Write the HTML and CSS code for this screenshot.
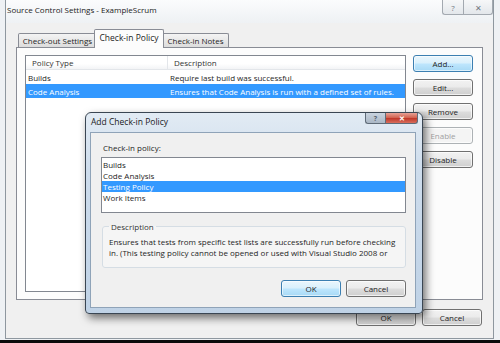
FILE: index.html
```html
<!doctype html>
<html lang="en">
    <head>
        <meta charset="UTF-8" />
        <title>Source Control Settings - ExampleScrum</title>
        <link rel="stylesheet" href="styles.css">
    </head>
    <body>
        <div class="desktop">
            <div class="window">
                <div class="titlebar">
                    <span class="title">Source Control Settings - ExampleScrum</span>
                    <div class="caption">
                        <span class="cap help">?</span>
                        <span class="cap close">&#x2715;</span>
                    </div>
                </div>
                <div class="client">
                    <div class="tabs">
                        <div class="tab t-out">Check-out Settings</div>
                        <div class="tab t-in active">Check-in Policy</div>
                        <div class="tab t-notes">Check-in Notes</div>
                    </div>
                    <div class="panel">
                        <div class="listview">
                            <div class="lv-head">
                                <span class="col1">Policy Type</span>
                                <span class="col2">Description</span>
                            </div>
                            <div class="lv-row">
                                <span class="col1">Builds</span>
                                <span class="col2">Require last build was successful.</span>
                            </div>
                            <div class="lv-row selected">
                                <span class="col1">Code Analysis</span>
                                <span class="col2">Ensures that Code Analysis is run with a defined set of rules.</span>
                            </div>
                        </div>
                        <div class="side-btns">
                            <button class="btn default">Add...</button>
                            <button class="btn">Edit...</button>
                            <button class="btn">Remove</button>
                            <button class="btn" disabled>Enable</button>
                            <button class="btn">Disable</button>
                        </div>
                    </div>
                    <div class="footer">
                        <button class="btn">OK</button>
                        <button class="btn">Cancel</button>
                    </div>
                </div>
            </div>

            <div class="dialog">
                <div class="dlg-title">
                    <span class="dlg-text">Add Check-in Policy</span>
                    <div class="dlg-caption">
                        <span class="dcap dhelp">?</span>
                        <span class="dcap dclose">&#x2715;</span>
                    </div>
                </div>
                <div class="dlg-client">
                    <div class="label">Check-in policy:</div>
                    <div class="listbox">
                        <div class="item">Builds</div>
                        <div class="item">Code Analysis</div>
                        <div class="item selected">Testing Policy</div>
                        <div class="item">Work Items</div>
                    </div>
                    <fieldset class="group">
                        <legend>Description</legend>
                        <div class="desc">
                            <span>Ensures that tests from specific test lists are successfully run before checking</span>
                            <span>in. (This testing policy cannot be opened or used with Visual Studio 2008 or</span>
                        </div>
                    </fieldset>
                    <div class="dlg-buttons">
                        <button class="btn default">OK</button>
                        <button class="btn">Cancel</button>
                    </div>
                </div>
            </div>
        </div>
    </body>
</html>
```

FILE: styles.css
```css
* {
    box-sizing: border-box;
}

html,
body {
    margin: 0;
    padding: 0;
}

body {
    width: 500px;
    height: 343px;
    overflow: hidden;
    background: #0b0b0b;
    font-family: "Open Sans", "Liberation Sans", sans-serif;
    font-size: 8px;
    color: #1e1e1e;
}

.desktop {
    position: relative;
    height: 340px;
    padding-left: 5px;
    background: #eef1f4;
}

.window {
    width: 489px;
    height: 339px;
    display: flex;
    flex-direction: column;
    background: #f0f0f0;
    border: 1px solid #8e979f;
    border-top: none;
}

.titlebar {
    height: 23px;
    display: flex;
    justify-content: space-between;
    align-items: flex-start;
    background: linear-gradient(#fbfcfd, #eef1f4);
}

.title {
    font-size: 8px;
    line-height: 20px;
    padding-left: 1px;
    color: #222;
}

.caption {
    display: flex;
}

.cap {
    height: 15px;
    display: flex;
    align-items: center;
    justify-content: center;
    border: 1px solid #a3a9b0;
    border-top: none;
    background: linear-gradient(#f6f7f8, #e3e7eb);
    color: #707880;
    font-size: 8px;
}

.cap.help {
    width: 21px;
    border-radius: 0 0 0 3px;
    border-right: none;
}

.cap.close {
    width: 30px;
    border-radius: 0 0 3px 0;
}

.client {
    flex: 1;
    display: flex;
    flex-direction: column;
    padding: 6px 10px 0 10px;
}

.tabs {
    display: flex;
    align-items: flex-end;
    height: 18px;
    padding-left: 2px;
}

.tab {
    height: 14px;
    line-height: 13px;
    text-align: center;
    border: 1px solid #898c95;
    border-bottom: none;
    border-radius: 2px 2px 0 0;
    background: linear-gradient(#f4f4f4, #dcdcdc);
    margin-right: -1px;
    white-space: nowrap;
}

.t-out {
    width: 79px;
}

.t-in {
    width: 70px;
}

.t-notes {
    width: 67px;
}

.tab.active {
    position: relative;
    z-index: 1;
    height: 19px;
    line-height: 16px;
    margin: 0 -2px -1px -2px;
    background: #fcfcfc;
    font-size: 8.5px;
}

.panel {
    height: 253px;
    display: flex;
    gap: 7px;
    padding: 7px 9px 7px 8px;
    border: 1px solid #898c95;
    background: #fcfcfc;
}

.listview {
    flex: 1;
    border: 1px solid #828790;
    background: #fff;
}

.lv-head,
.lv-row {
    display: flex;
    height: 14px;
    align-items: center;
    white-space: nowrap;
}

.lv-head {
    border-bottom: 1px solid #e3e6ea;
    background: linear-gradient(#ffffff 60%, #f3f4f6);
    color: #333;
}

.lv-head .col1 {
    border-right: 1px solid #e3e6ea;
    height: 100%;
    line-height: 13px;
}

.col1 {
    width: 142px;
    padding-left: 2px;
}

.lv-head .col1,
.lv-head .col2 {
    padding-left: 6px;
}

.col2 {
    padding-left: 2px;
    overflow: hidden;
}

.lv-row.selected {
    background: #3399ff;
    color: #fff;
}

.side-btns {
    width: 60px;
    display: flex;
    flex-direction: column;
    gap: 7px;
}

.btn {
    height: 17px;
    width: 60px;
    padding: 0;
    font-family: inherit;
    font-size: 8px;
    color: #1e1e1e;
    border: 1px solid #707070;
    border-radius: 3px;
    background: linear-gradient(#f2f2f2 0%, #ebebeb 48%, #dddddd 52%, #cfcfcf 100%);
    box-shadow: inset 0 0 0 1px rgba(255, 255, 255, 0.7);
}

.btn.default {
    border-color: #3c7fb1;
    background: linear-gradient(#eaf6fd 0%, #d9f0fc 48%, #bee6fd 52%, #a7d9f5 100%);
    box-shadow: inset 0 0 0 1px rgba(255, 255, 255, 0.6);
}

.btn:disabled {
    color: #a0a0a0;
    border-color: #adb2b5;
    background: #f4f4f4;
}

.footer {
    display: flex;
    justify-content: flex-end;
    gap: 6px;
    padding: 9px 1px 0 0;
}

/* add check-in policy dialog */
.dialog {
    position: absolute;
    left: 85px;
    top: 112px;
    width: 338px;
    height: 202px;
    display: flex;
    flex-direction: column;
    border: 1px solid #3a4653;
    border-radius: 6px 6px 4px 4px;
    background: linear-gradient(#e2ebf4 0%, #cddcec 30%, #bfd2e6 100%);
    box-shadow: 3px 4px 9px rgba(0, 0, 0, 0.55);
}

.dlg-title {
    height: 19px;
    display: flex;
    justify-content: space-between;
    align-items: flex-start;
}

.dlg-text {
    padding-left: 5px;
    line-height: 18px;
    font-size: 8.5px;
    color: #1a1a1a;
}

.dlg-caption {
    display: flex;
    margin-right: 4px;
}

.dcap {
    height: 11px;
    display: flex;
    align-items: center;
    justify-content: center;
    border: 1px solid #5f6b78;
    border-top: none;
    font-size: 7px;
    font-weight: bold;
}

.dhelp {
    width: 20px;
    border-right: none;
    border-radius: 0 0 0 3px;
    background: linear-gradient(#c9d3de, #aab7c5);
    color: #59636e;
}

.dclose {
    width: 33px;
    border-radius: 0 0 3px 0;
    background: linear-gradient(#e6a195 0%, #d26452 45%, #c0392b 55%, #d86d5c 100%);
    color: #fff;
}

.dlg-client {
    flex: 1;
    margin: 0 6px 5px 4px;
    padding: 9px 9px 0 10px;
    border: 1px solid #8fa3b8;
    background: #f0f0f0;
}

.label {
    line-height: 11px;
    padding-left: 2px;
}

.listbox {
    margin-top: 4px;
    height: 56px;
    padding-top: 1px;
    border: 1px solid #828790;
    background: #fff;
}

.item {
    line-height: 11px;
    padding-left: 1px;
}

.item.selected {
    background: #3399ff;
    color: #fff;
}

.group {
    margin: 8px 0 0 1px;
    height: 47px;
    padding: 0 6px;
    border: 1px solid #d5dde4;
    border-radius: 3px;
    background: #f5f5f5;
}

.group legend {
    padding: 0 2px;
    line-height: 11px;
    color: #333;
}

.desc {
    margin-top: 5px;
    height: 22px;
    overflow: hidden;
}

.desc span {
    display: block;
    line-height: 10.5px;
    white-space: nowrap;
}

.dlg-buttons {
    display: flex;
    justify-content: flex-end;
    gap: 5px;
    margin-top: 12px;
}
```
